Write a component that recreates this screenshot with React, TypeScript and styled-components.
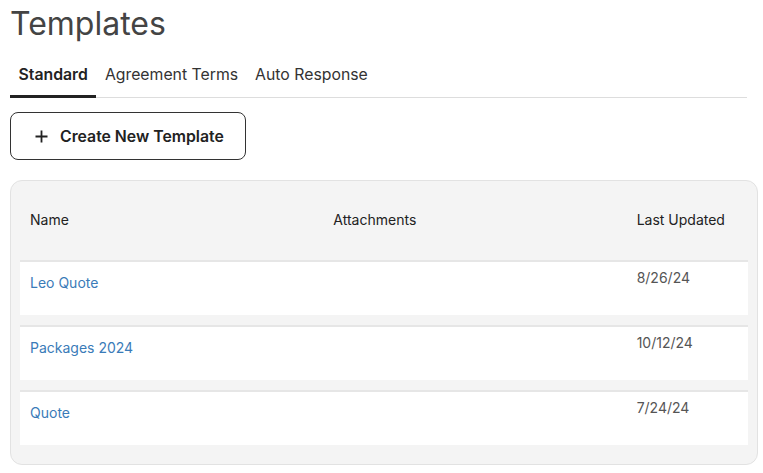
import React from "react";
import styled, { createGlobalStyle } from "styled-components";

const Global = createGlobalStyle`
  html, body { margin: 0; padding: 0; background: #fff; }
  body { font-family: Inter, "Noto Sans", "Liberation Sans", sans-serif; color: #222; }
  * { box-sizing: border-box; }
`;

const Page = styled.div`
  padding: 0 10px 0 10px;
  width: 763px;
`;

const Title = styled.h1`
  margin: 0;
  padding-top: 4px;
  font-size: 32px;
  line-height: 40px;
  font-weight: 400;
  color: #444;
`;

const Tabs = styled.div`
  display: flex;
  margin-top: 20px;
  margin-right: 6px;
  border-bottom: 1px solid #dddddd;
`;

const Tab = styled.div<{ $active?: boolean }>`
  padding: 0 8.5px 9px 8.5px;
  font-size: 15.8px;
  line-height: 22px;
  font-weight: ${(p) => (p.$active ? 600 : 400)};
  color: ${(p) => (p.$active ? "#222" : "#333")};
  border-bottom: 3px solid ${(p) => (p.$active ? "#222" : "transparent")};
  margin-bottom: -1px;
`;

const Button = styled.button`
  margin-top: 14px;
  display: flex;
  align-items: center;
  gap: 12px;
  width: 236px;
  height: 48px;
  padding: 0 0 0 24px;
  background: #fff;
  border: 1px solid #333;
  border-radius: 8px;
  font-family: inherit;
  font-size: 15.8px;
  font-weight: 600;
  color: #222;
`;

const Card = styled.div`
  margin-top: 20px;
  width: 748px;
  background: #f4f4f4;
  border: 1px solid #e2e2e2;
  border-radius: 12px;
  padding: 0 9px 19px 9px;
  display: flex;
  flex-direction: column;
  gap: 10px;
`;

const Grid = styled.div`
  display: grid;
  grid-template-columns: 5fr 5fr 2fr;
`;

const HeadRow = styled(Grid)`
  height: 69px;
  padding-top: 29px;
  align-items: start;
`;

const HeadCell = styled.div`
  padding: 0 10px;
  font-size: 14px;
  line-height: 20px;
  color: #222;
`;

const Row = styled(Grid)`
  background: #fff;
  border-top: 2px solid #e6e6e6;
  height: 55px;
`;

const Cell = styled.div<{ $top: number }>`
  padding: ${(p) => p.$top}px 10px 0 10px;
  font-size: 14px;
  line-height: 20px;
`;

const Link = styled.a`
  color: #3a7bb8;
  text-decoration: none;
`;

const DateText = styled.span`
  color: #555;
`;

const Plus = () => (
  <svg width="13" height="13" viewBox="0 0 13 13">
    <path d="M6.5 0.5v12M0.5 6.5h12" stroke="#222" strokeWidth="1.8" />
  </svg>
);

const rows = [
  { name: "Leo Quote", date: "8/26/24" },
  { name: "Packages 2024", date: "10/12/24" },
  { name: "Quote", date: "7/24/24" },
];

export default function App() {
  return (
    <Page>
      <Global />
      <Title>Templates</Title>
      <Tabs>
        <Tab $active>Standard</Tab>
        <Tab>Agreement Terms</Tab>
        <Tab>Auto Response</Tab>
      </Tabs>
      <Button>
        <Plus />
        Create New Template
      </Button>
      <Card>
        <HeadRow>
          <HeadCell>Name</HeadCell>
          <HeadCell>Attachments</HeadCell>
          <HeadCell>Last Updated</HeadCell>
        </HeadRow>
        {rows.map((r) => (
          <Row key={r.name}>
            <Cell $top={11}>
              <Link href="#">{r.name}</Link>
            </Cell>
            <Cell $top={0} />
            <Cell $top={6}>
              <DateText>{r.date}</DateText>
            </Cell>
          </Row>
        ))}
      </Card>
    </Page>
  );
}
